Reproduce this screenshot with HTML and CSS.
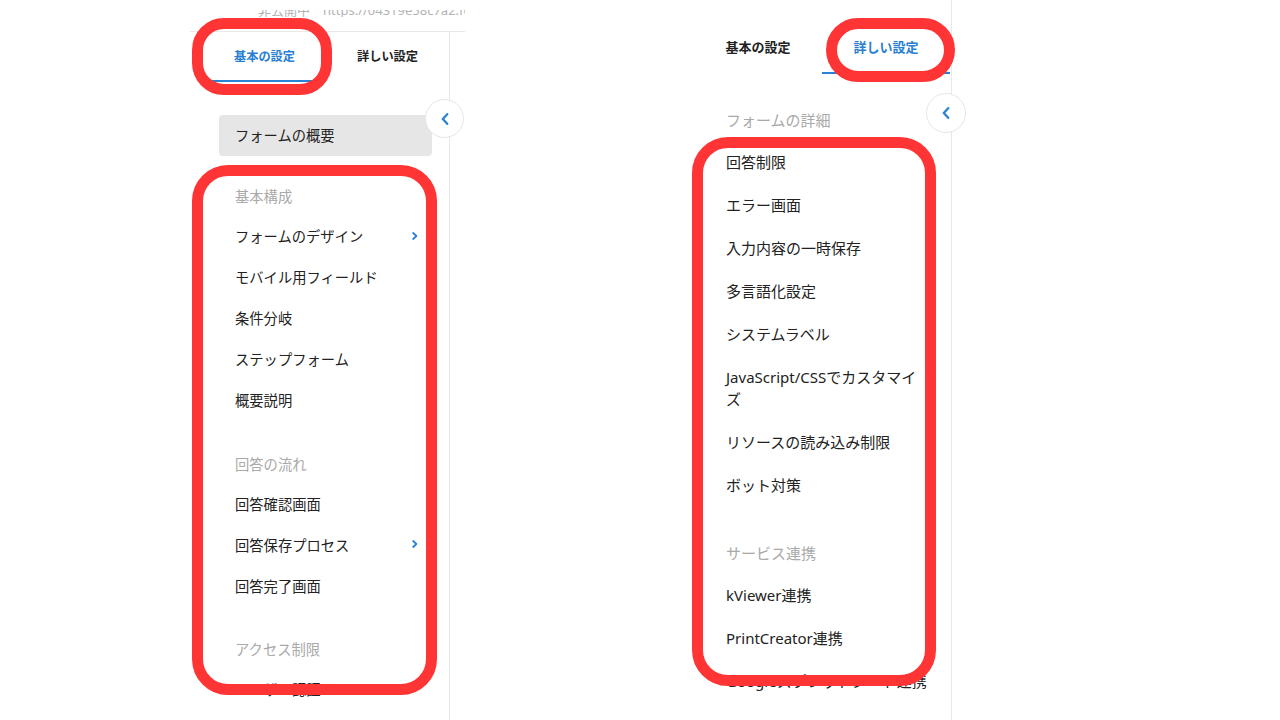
FILE: index.html
```html
<!DOCTYPE html>
<html lang="ja">
<head>
<meta charset="utf-8">
<title>フォーム設定</title>
<link rel="stylesheet" href="styles.css">
</head>
<body>
<div class="stage">
  <section class="panel panel-left">
    <div class="urlbar"><div class="urlclip"><span class="url">非公開中　https://04319e58c7a2.form.kintoneapp.com/public/</span></div></div>
    <nav class="sidebar sidebar-left">
      <div class="tabs">
        <div class="tab active">基本の設定</div>
        <div class="tab">詳しい設定</div>
      </div>
      <div class="overview">フォームの概要</div>
      <div class="group group-first">
        <div class="group-label">基本構成</div>
        <div class="item">フォームのデザイン<svg class="sub" viewBox="0 0 6 8" width="6" height="8"><path d="M1.2 1 L4.4 4 L1.2 7" fill="none" stroke="#2a82d6" stroke-width="1.8" stroke-linecap="round" stroke-linejoin="round"/></svg></div>
        <div class="item">モバイル用フィールド</div>
        <div class="item">条件分岐</div>
        <div class="item">ステップフォーム</div>
        <div class="item">概要説明</div>
      </div>
      <div class="group">
        <div class="group-label">回答の流れ</div>
        <div class="item">回答確認画面</div>
        <div class="item">回答保存プロセス<svg class="sub" viewBox="0 0 6 8" width="6" height="8"><path d="M1.2 1 L4.4 4 L1.2 7" fill="none" stroke="#2a82d6" stroke-width="1.8" stroke-linecap="round" stroke-linejoin="round"/></svg></div>
        <div class="item">回答完了画面</div>
      </div>
      <div class="group">
        <div class="group-label">アクセス制限</div>
        <div class="item">ユーザー認証</div>
      </div>
    </nav>
    <button class="collapse collapse-left" type="button" aria-label="閉じる"><svg viewBox="0 0 8 12" width="8" height="12"><path d="M6.2 1.2 L1.8 6 L6.2 10.8" fill="none" stroke="#2a82d6" stroke-width="2.3" stroke-linecap="round" stroke-linejoin="round"/></svg></button>
    <div class="mark mark-left-tab"></div>
    <div class="mark mark-left-list"></div>
  </section>

  <section class="panel panel-right">
    <nav class="sidebar sidebar-right">
      <div class="tabs tabs-right">
        <div class="tab">基本の設定</div>
        <div class="tab active">詳しい設定</div>
      </div>
      <div class="rgroup rgroup-first">
        <div class="rgroup-label">フォームの詳細</div>
        <div class="ritem">回答制限</div>
        <div class="ritem">エラー画面</div>
        <div class="ritem">入力内容の一時保存</div>
        <div class="ritem">多言語化設定</div>
        <div class="ritem">システムラベル</div>
        <div class="ritem">JavaScript/CSSでカスタマイズ</div>
        <div class="ritem">リソースの読み込み制限</div>
        <div class="ritem">ボット対策</div>
      </div>
      <div class="rgroup">
        <div class="rgroup-label">サービス連携</div>
        <div class="ritem">kViewer連携</div>
        <div class="ritem">PrintCreator連携</div>
        <div class="ritem">Googleスプレッドシート連携</div>
      </div>
    </nav>
    <button class="collapse collapse-right" type="button" aria-label="閉じる"><svg viewBox="0 0 8 12" width="8" height="12"><path d="M6.2 1.2 L1.8 6 L6.2 10.8" fill="none" stroke="#2a82d6" stroke-width="2.3" stroke-linecap="round" stroke-linejoin="round"/></svg></button>
    <div class="mark mark-right-tab"></div>
    <div class="mark mark-right-list"></div>
  </section>
</div>
</body>
</html>
```
FILE: styles.css
```css
* { box-sizing: border-box; }

html, body {
  margin: 0;
  padding: 0;
  background: #ffffff;
}

body {
  width: 1280px;
  height: 720px;
  overflow: hidden;
  font-family: "Noto Sans", "Noto Sans CJK JP", sans-serif;
  color: #222222;
}

.stage {
  display: flex;
  align-items: flex-start;
  height: 720px;
}

.panel {
  position: relative;
  height: 720px;
}

/* ---------- left screenshot ---------- */
.panel-left {
  margin-left: 190px;
  width: 275px;
  display: flex;
  flex-direction: column;
}

.urlbar {
  height: 32px;
  border-bottom: 1px solid #e8e8e8;
  padding-left: 68px;
  padding-top: 10px;
  overflow: hidden;
}

.urlclip {
  height: 7px;
  overflow: hidden;
  white-space: nowrap;
}

.url {
  display: block;
  margin-top: -7px;
  font-size: 13px;
  line-height: 14px;
  color: #b3b3b3;
  white-space: nowrap;
}

.sidebar-left {
  width: 260px;
  flex: 1;
  border-right: 1px solid #e8e8e8;
}

.tabs {
  display: flex;
  padding-left: 13px;
}

.tab {
  width: 123px;
  height: 50px;
  display: flex;
  align-items: center;
  justify-content: center;
  font-size: 12.2px;
  font-weight: 700;
  color: #222222;
  border-bottom: 2px solid transparent;
}

.tab.active {
  color: #2a7fd2;
  border-bottom-color: #2a82d6;
}

.overview {
  margin: 33px 0 0 29px;
  width: 213px;
  height: 41px;
  line-height: 41px;
  padding-left: 16px;
  background: #e6e6e6;
  border-radius: 4px;
  font-size: 14.3px;
}

.group {
  margin: 25.5px 0 0 29px;
  width: 213px;
}

.group-first {
  margin-top: 22px;
}

.group-label {
  height: 37px;
  line-height: 37px;
  padding-left: 16px;
  font-size: 14.3px;
  color: #a9a9a9;
}

.item {
  height: 41px;
  display: flex;
  align-items: center;
  justify-content: space-between;
  padding: 0 14px 0 16px;
  font-size: 14.3px;
  color: #222222;
  white-space: nowrap;
}

.sub {
  flex: none;
}

.collapse {
  position: absolute;
  width: 39px;
  height: 39px;
  border-radius: 50%;
  background: #ffffff;
  border: 1px solid #e6e6e6;
  padding: 0;
  display: flex;
  align-items: center;
  justify-content: center;
}

.collapse-left {
  left: 235px;
  top: 99px;
}

/* ---------- right screenshot ---------- */
.panel-right {
  margin-left: 229px;
  width: 258px;
}

.sidebar-right {
  height: 720px;
  border-right: 1px solid #e8e8e8;
}

.tabs-right {
  padding: 21px 0 0 0;
}

.tabs-right .tab {
  width: 128px;
  height: 53px;
  font-size: 13px;
}

.rgroup {
  padding: 0 21px 0 32px;
  margin-top: 27px;
}

.rgroup-first {
  margin-top: 25px;
}

.rgroup-label {
  height: 40px;
  line-height: 40px;
  font-size: 15px;
  color: #a9a9a9;
}

.rgroup-first .rgroup-label {
  height: 41px;
  line-height: 42px;
}

.ritem {
  padding: 10.5px 0;
  line-height: 22px;
  font-size: 15px;
  color: #222222;
}

.collapse-right {
  left: 232px;
  top: 93px;
  width: 40px;
  height: 40px;
}

/* ---------- red annotation marks ---------- */
.mark {
  position: absolute;
  border: 11px solid #ff3434;
  pointer-events: none;
}

.mark-left-tab {
  left: 2px;
  top: 18px;
  width: 140px;
  height: 77px;
  border-radius: 32px;
}

.mark-left-list {
  left: 2px;
  top: 165px;
  width: 245px;
  height: 530px;
  border-radius: 36px;
}

.mark-right-tab {
  left: 132px;
  top: 18px;
  width: 129px;
  height: 64px;
  border-radius: 32px;
}

.mark-right-list {
  left: -2px;
  top: 137px;
  width: 244px;
  height: 549px;
  border-radius: 36px;
}
```
